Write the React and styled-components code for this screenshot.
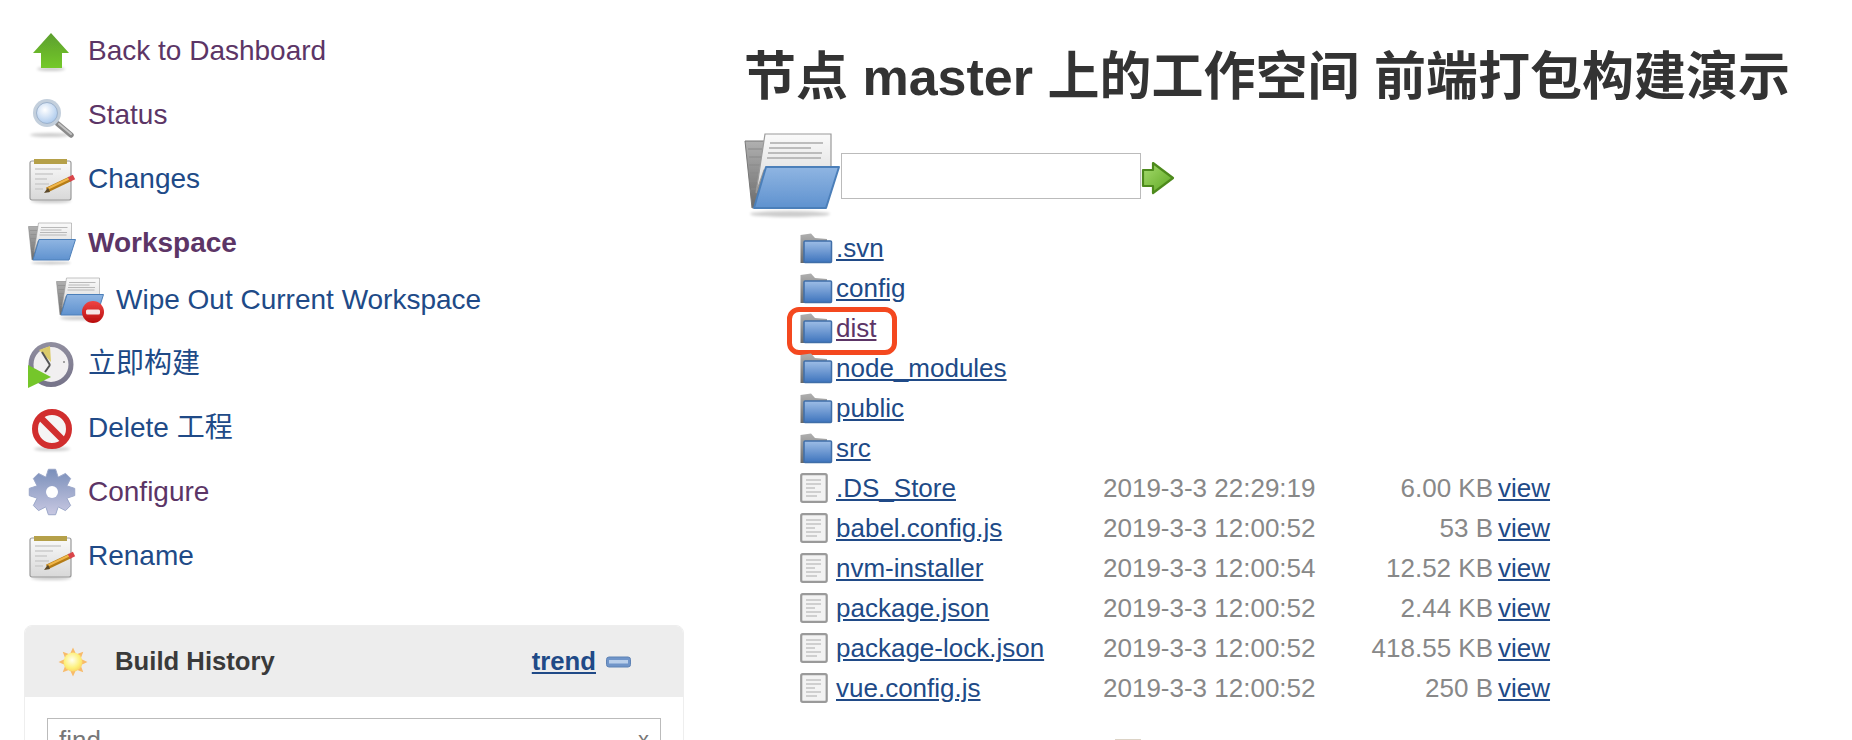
import React from "react";
import styled, { createGlobalStyle } from "styled-components";

const Global = createGlobalStyle`
  html, body { margin: 0; padding: 0; height: 740px; overflow: hidden; background: #fff; }
  body { font-family: "Liberation Sans", "Noto Sans CJK SC", Arial, sans-serif; }
`;

const LINK = "#204a87";
const VISITED = "#5c3566";

const Page = styled.div`
  display: flex;
  width: 1852px;
  height: 740px;
  overflow: hidden;
`;
const Sidebar = styled.aside`
  flex: 0 0 744px;
  box-sizing: border-box;
  padding: 19px 60px 0 24px;
`;
const Tasks = styled.nav`
  display: flex;
  flex-direction: column;
`;
const Task = styled.a`
  display: flex;
  align-items: center;
  gap: 12px;
  height: 64px;
  padding-left: 4px;
  font-size: 28px;
  line-height: 32px;
  color: ${(p) => (p.$visited ? VISITED : LINK)};
  font-weight: ${(p) => (p.$active ? 700 : 400)};
`;
const SubTask = styled(Task)`
  height: 50px;
  padding-left: 32px;
  margin-bottom: 7px;
`;
const IconBox = styled.span`
  flex: 0 0 48px;
  width: 48px;
  height: 48px;
  display: block;
`;
const Panel = styled.section`
  margin-top: 37px;
  border: 1px solid #eee;
  border-radius: 8px 8px 0 0;
  overflow: hidden;
`;
const PanelHead = styled.header`
  display: flex;
  align-items: center;
  height: 71px;
  padding: 0 52px 0 33px;
  background: #ededed;
`;
const PanelTitle = styled.h2`
  flex: 1;
  margin: 0 0 0 27px;
  font-size: 25.7px;
  font-weight: 700;
  color: #3a3a3a;
`;
const TrendLink = styled.a`
  font-size: 25.7px;
  font-weight: 700;
  color: ${LINK};
  text-decoration: underline;
  margin-right: 10px;
`;
const PanelBody = styled.div`
  padding: 21px 22px;
`;
const FindBox = styled.div`
  display: flex;
  align-items: center;
  justify-content: space-between;
  box-sizing: border-box;
  height: 44px;
  padding: 0 11px;
  border: 1.5px solid #bbb;
  font-size: 26px;
  color: #777;
`;
const ClearMark = styled.span`
  font-size: 22px;
`;
const Main = styled.main`
  flex: 1;
  padding-top: 47px;
`;
const Title = styled.h1`
  margin: 0;
  font-size: 52px;
  line-height: 60px;
  font-weight: 700;
  color: #333;
  white-space: nowrap;
`;
const PathBar = styled.form`
  display: flex;
  align-items: center;
  height: 84px;
  margin: 27px 0 10px;
`;
const PathInput = styled.div`
  box-sizing: border-box;
  width: 300px;
  height: 46px;
  margin-left: 1px;
  border: 1.5px solid #bbb;
  background: #fff;
`;
const GoButton = styled.span`
  display: block;
  margin: 4px 0 0 1px;
  width: 32px;
  height: 32px;
`;
const FileTable = styled.div`
  margin-left: 56px;
  width: 760px;
`;
const FileRow = styled.div`
  position: relative;
  display: grid;
  grid-template-columns: 36px 267px 227px 163px 62px;
  align-items: center;
  height: 40px;
  font-size: 26px;
`;
const FileLink = styled.a`
  color: ${(p) => (p.$visited ? VISITED : LINK)};
  text-decoration: underline;
  white-space: nowrap;
`;
const FileDate = styled.span`
  color: #888;
  white-space: nowrap;
`;
const FileSize = styled.span`
  color: #888;
  text-align: right;
  white-space: nowrap;
`;
const ViewCell = styled.span`
  padding-left: 5px;
`;
const Highlight = styled.span`
  position: absolute;
  left: -13px;
  top: -1px;
  width: 110px;
  height: 48px;
  box-sizing: border-box;
  border: 5px solid #f4481f;
  border-radius: 12px;
  pointer-events: none;
`;
const FooterMark = styled.div`
  width: 26px;
  height: 20px;
  margin: 31px 0 0 371px;
  background: #dcd3c6;
`;
const HiddenDefs = styled.svg`
  position: absolute;
  width: 0;
  height: 0;
`;

const Defs = () => (
  <HiddenDefs aria-hidden="true">
    <defs>
      <filter id="soft" x="-10%" y="-10%" width="120%" height="120%"><feGaussianBlur stdDeviation="0.6" /></filter>
      <filter id="blurShadow" x="-30%" y="-100%" width="160%" height="300%"><feGaussianBlur stdDeviation="1.6" /></filter>
      <linearGradient id="gUp" x1="0" y1="0" x2="0" y2="1"><stop offset="0" stopColor="#5c9e2e" /><stop offset="1" stopColor="#74c92a" /></linearGradient>
      <linearGradient id="gGo" x1="0" y1="0" x2="1" y2="1"><stop offset="0" stopColor="#a8dc70" /><stop offset="1" stopColor="#5aa61e" /></linearGradient>
      <radialGradient id="gLens" cx="0.4" cy="0.35" r="0.8"><stop offset="0" stopColor="#fff" /><stop offset="1" stopColor="#9dc0ea" /></radialGradient>
      <linearGradient id="gBlue" x1="0" y1="0" x2="0" y2="1"><stop offset="0" stopColor="#8fb5e2" /><stop offset="1" stopColor="#5f92cf" /></linearGradient>
      <linearGradient id="gSmallBlue" x1="0" y1="0" x2="0" y2="1"><stop offset="0" stopColor="#9dbde6" /><stop offset="1" stopColor="#3e74bd" /></linearGradient>
      <linearGradient id="gGray" x1="0" y1="0" x2="0" y2="1"><stop offset="0" stopColor="#b0b0b0" /><stop offset="1" stopColor="#6a6a6a" /></linearGradient>
      <linearGradient id="gPaper" x1="0" y1="0" x2="0" y2="1"><stop offset="0" stopColor="#fafafa" /><stop offset="1" stopColor="#d8d8d8" /></linearGradient>
      <linearGradient id="gGear" x1="0" y1="0" x2="0" y2="1"><stop offset="0" stopColor="#7a8fba" /><stop offset="1" stopColor="#c8c8e2" /></linearGradient>
      <radialGradient id="gSun" cx="0.45" cy="0.4" r="0.7"><stop offset="0" stopColor="#fffff0" /><stop offset="0.6" stopColor="#fdf07a" /><stop offset="1" stopColor="#f9c860" /></radialGradient>
      <linearGradient id="gBadge" x1="0" y1="0" x2="0" y2="1"><stop offset="0" stopColor="#ef4444" /><stop offset="1" stopColor="#b80d0d" /></linearGradient>
      <linearGradient id="gRing" x1="0" y1="0" x2="0" y2="1"><stop offset="0" stopColor="#8f8d9e" /><stop offset="1" stopColor="#77748a" /></linearGradient>
    </defs>
  </HiddenDefs>
);

const Shadow = ({ cx, cy, rx, ry = 2 }) => (
  <ellipse cx={cx} cy={cy} rx={rx} ry={ry} fill="#000" opacity="0.2" filter="url(#blurShadow)" />
);

const Svg = ({ w = 48, h = 48, vb, children }) => (
  <svg width={w} height={h} viewBox={vb || `0 0 ${w} ${h}`} style={{ display: "block", overflow: "visible" }}>
    {children}
  </svg>
);

const UpArrowIcon = () => (
  <Svg>
    <Shadow cx={23} cy={42} rx={14} />
    <polygon points="23,6 41,26 34,26 34,41 13,41 13,26 5,26" fill="url(#gUp)" filter="url(#soft)" />
  </Svg>
);

const SearchIcon = () => (
  <Svg>
    <Shadow cx={22} cy={44} rx={20} />
    <g filter="url(#soft)">
      <line x1="30" y1="33" x2="43" y2="44" stroke="#8a8a8a" strokeWidth="5.5" strokeLinecap="round" />
      <line x1="31" y1="33" x2="43" y2="43" stroke="#c4c4c4" strokeWidth="2" strokeLinecap="round" />
      <circle cx="19" cy="22" r="14" fill="#c3cfdc" />
      <circle cx="19" cy="22" r="10.5" fill="url(#gLens)" stroke="#9db2cc" strokeWidth="1" />
    </g>
  </Svg>
);

const NotepadIcon = () => (
  <Svg>
    <Shadow cx={23} cy={46} rx={20} />
    <g filter="url(#soft)">
      <rect x="2" y="6" width="41" height="39" rx="2" fill="url(#gPaper)" stroke="#9a9a9a" strokeWidth="1.2" />
      <rect x="6" y="4" width="33" height="5" fill="#b5a04a" />
      <path d="M7 14h26M7 19h18M7 24h12M7 29h14M7 34h8" stroke="#cbcbcb" strokeWidth="1.6" fill="none" />
      <line x1="19" y1="35" x2="42" y2="24" stroke="#b57c16" strokeWidth="5" />
      <line x1="19" y1="34" x2="41" y2="23.5" stroke="#f0b64a" strokeWidth="2" />
      <line x1="41" y1="24.5" x2="46" y2="22" stroke="#d9444a" strokeWidth="5" />
      <polygon points="20,32.5 22,37 16,38" fill="#5c4a2a" />
    </g>
  </Svg>
);

const OpenFolderArt = () => (
  <g filter="url(#soft)">
    <polygon points="1,7 22,7 22,40 20,70 8,74" fill="url(#gGray)" stroke="#777" strokeWidth="1" />
    <path d="M4 15h16M5 23h16M5 31h16M6 39h15M6 47h14M7 55h12" stroke="#8a8a8a" strokeWidth="1.2" fill="none" />
    <polygon points="21,0 87,0 87,36 20,36 12,59" fill="url(#gPaper)" stroke="#9a9a9a" strokeWidth="1.2" />
    <path d="M26 9h53M25 14h42M24 19h54M23 24h54" stroke="#aaa" strokeWidth="1.6" fill="none" />
    <polygon points="22,33 95,33 82,74 10,74" fill="url(#gBlue)" stroke="#4c7fb9" strokeWidth="2" strokeLinejoin="round" />
  </g>
);

const WorkspaceIcon = () => (
  <Svg w={48} h={48} vb="0 -8 96 96">
    <Shadow cx={46} cy={80} rx={40} ry={3} />
    <OpenFolderArt />
  </Svg>
);

const WipeIcon = () => (
  <Svg>
    <Shadow cx={22} cy={42} rx={18} />
    <g transform="scale(0.5) translate(0 4)"><OpenFolderArt /></g>
    <g filter="url(#soft)">
      <circle cx="37" cy="36" r="11" fill="url(#gBadge)" />
      <rect x="30" y="33.5" width="14" height="5" rx="1.5" fill="#f5e6e6" />
    </g>
  </Svg>
);

const ClockIcon = () => (
  <Svg>
    <g filter="url(#soft)">
      <circle cx="23" cy="24.5" r="20" fill="#f1eff0" stroke="url(#gRing)" strokeWidth="5" />
      <polygon points="11,10 22,6 23,22" fill="#dccb6a" />
      <line x1="14" y1="12" x2="22" y2="25" stroke="#555" strokeWidth="2" />
      <line x1="22" y1="25" x2="17" y2="32" stroke="#555" strokeWidth="2" />
      <circle cx="36" cy="22" r="1" fill="#888" />
      <polygon points="0,25 23,37 0,48" fill="#74c62a" />
    </g>
  </Svg>
);

const NoEntryIcon = () => (
  <Svg>
    <Shadow cx={24} cy={45} rx={18} />
    <g filter="url(#soft)">
      <circle cx="24" cy="25" r="17" fill="#f5f5f5" stroke="#d12f2f" strokeWidth="6" />
      <line x1="12" y1="13" x2="36" y2="37" stroke="#d12f2f" strokeWidth="6.5" />
    </g>
  </Svg>
);

const gearPath = (() => {
  const cx = 24, cy = 24, R = 23, r = 16.5, n = 8;
  const pts = [];
  for (let i = 0; i < n; i++) {
    const a = (i * 2 * Math.PI) / n - Math.PI / 2;
    const s = Math.PI / n;
    [[-s * 0.95, r], [-s * 0.4, R], [s * 0.4, R], [s * 0.95, r]].forEach(([d, rad]) => {
      pts.push(`${(cx + rad * Math.cos(a + d)).toFixed(2)},${(cy + rad * Math.sin(a + d)).toFixed(2)}`);
    });
  }
  return pts.join(" ");
})();

const GearIcon = () => (
  <Svg>
    <g filter="url(#soft)">
      <polygon points={gearPath} fill="url(#gGear)" stroke="#9aa6c8" strokeWidth="1" strokeLinejoin="round" />
      <circle cx="24" cy="24" r="6" fill="#fff" />
    </g>
  </Svg>
);

const sunRays = Array.from({ length: 8 }, (_, i) => (i * 360) / 8);

const SunIcon = () => (
  <Svg w={30} h={30}>
    <g filter="url(#soft)">
      {sunRays.map((a) => (
        <polygon key={a} points="15,0.5 18,7 12,7" fill="#f8bb6a" transform={`rotate(${a} 15 15)`} />
      ))}
      <circle cx="15" cy="15" r="9.5" fill="url(#gSun)" />
    </g>
  </Svg>
);

const MinusIcon = () => (
  <Svg w={25} h={12}>
    <g filter="url(#soft)">
      <rect x="0.5" y="1" width="24" height="10" rx="2.5" fill="#6f95c9" stroke="#5f83b5" />
      <rect x="3" y="4" width="19" height="3.5" fill="#b9cfeb" />
    </g>
  </Svg>
);

const GoArrowIcon = () => (
  <Svg w={32} h={32}>
    <polygon points="1,8 11,8 11,1 31,16 11,31 11,24 1,24" fill="url(#gGo)" stroke="#4d8a1c" strokeWidth="2.2" strokeLinejoin="round" filter="url(#soft)" />
  </Svg>
);

const SmallFolderIcon = () => (
  <Svg w={32} h={30}>
    <g filter="url(#soft)">
      <path d="M0.5 2 L11 0.5 L15 5 L27 6 L27 30 L0.5 30 Z" fill="url(#gGray)" />
      <rect x="4" y="8" width="27.5" height="21.5" rx="1" fill="url(#gSmallBlue)" stroke="#3f6ea8" strokeWidth="1.5" />
    </g>
  </Svg>
);

const FileIcon = () => (
  <Svg w={28} h={30}>
    <g filter="url(#soft)">
      <rect x="1.2" y="1.2" width="25.5" height="27.6" rx="1.5" fill="#f3f3f3" stroke="#9a9a9a" strokeWidth="2.2" />
      <path d="M6 7h15M6 11h15M6 15h9M6 19h15M6 23h11" stroke="#cfcfcf" strokeWidth="2" fill="none" />
    </g>
  </Svg>
);

const folders = [".svn", "config", "dist", "node_modules", "public", "src"];
const files = [
  [".DS_Store", "2019-3-3 22:29:19", "6.00 KB"],
  ["babel.config.js", "2019-3-3 12:00:52", "53 B"],
  ["nvm-installer", "2019-3-3 12:00:54", "12.52 KB"],
  ["package.json", "2019-3-3 12:00:52", "2.44 KB"],
  ["package-lock.json", "2019-3-3 12:00:52", "418.55 KB"],
  ["vue.config.js", "2019-3-3 12:00:52", "250 B"],
];

export default function App() {
  return (
    <Page>
      <Global />
      <Defs />
      <Sidebar>
        <Tasks>
          <Task $visited><IconBox><UpArrowIcon /></IconBox>Back to Dashboard</Task>
          <Task $visited><IconBox><SearchIcon /></IconBox>Status</Task>
          <Task><IconBox><NotepadIcon /></IconBox>Changes</Task>
          <Task $visited $active><IconBox><WorkspaceIcon /></IconBox>Workspace</Task>
          <SubTask><IconBox><WipeIcon /></IconBox>Wipe Out Current Workspace</SubTask>
          <Task><IconBox><ClockIcon /></IconBox>立即构建</Task>
          <Task><IconBox><NoEntryIcon /></IconBox>Delete 工程</Task>
          <Task $visited><IconBox><GearIcon /></IconBox>Configure</Task>
          <Task><IconBox><NotepadIcon /></IconBox>Rename</Task>
        </Tasks>
        <Panel>
          <PanelHead>
            <SunIcon />
            <PanelTitle>Build History</PanelTitle>
            <TrendLink>trend</TrendLink>
            <MinusIcon />
          </PanelHead>
          <PanelBody>
            <FindBox>find<ClearMark>x</ClearMark></FindBox>
          </PanelBody>
        </Panel>
      </Sidebar>
      <Main>
        <Title>节点 master 上的工作空间 前端打包构建演示</Title>
        <PathBar>
          <Svg w={96} h={84}>
            <Shadow cx={46} cy={80} rx={40} ry={3} />
            <OpenFolderArt />
          </Svg>
          <PathInput />
          <GoButton><GoArrowIcon /></GoButton>
        </PathBar>
        <FileTable>
          {folders.map((name) => (
            <FileRow key={name}>
              <SmallFolderIcon />
              <FileLink $visited={name === "dist"}>{name}</FileLink>
              {name === "dist" && <Highlight />}
            </FileRow>
          ))}
          {files.map(([name, date, size]) => (
            <FileRow key={name}>
              <FileIcon />
              <FileLink>{name}</FileLink>
              <FileDate>{date}</FileDate>
              <FileSize>{size}</FileSize>
              <ViewCell><FileLink>view</FileLink></ViewCell>
            </FileRow>
          ))}
        </FileTable>
        <FooterMark />
      </Main>
    </Page>
  );
}
